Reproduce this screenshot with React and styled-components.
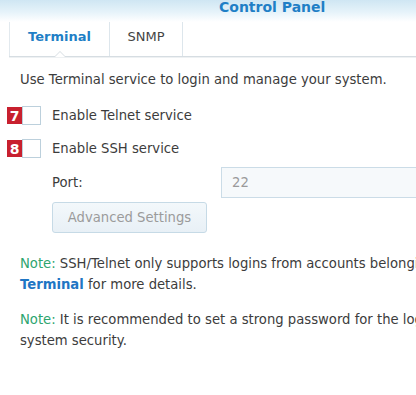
import React from 'react';
import styled, { createGlobalStyle } from 'styled-components';

const Global = createGlobalStyle`
  html, body {
    margin: 0;
    padding: 0;
    background: #fff;
    overflow: hidden;
  }
  body {
    font-family: "DejaVu Sans", Verdana, sans-serif;
    color: #3c3c3c;
  }
`;

const Window = styled.div`
  width: 416px;
  height: 395px;
  overflow: hidden;
  background: #fff;
`;

const TitleBar = styled.div`
  height: 22px;
  display: flex;
  align-items: flex-end;
  padding-left: 219px;
  background: linear-gradient(to bottom, #cfe6f3 0%, #e6f3fa 55%, #ffffff 100%);
`;

const Title = styled.div`
  font-weight: bold;
  font-size: 14px;
  color: #1f7fc6;
  line-height: 16px;
  margin-bottom: 7px;
  white-space: nowrap;
`;

const TabBar = styled.div`
  margin-left: 9px;
  height: 34px;
  display: flex;
  border-bottom: 1px solid #d6dde2;
  box-shadow: 0 1px 0 #eef1f3;
  position: relative;
`;

const Tab = styled.div`
  width: ${p => p.$w}px;
  display: flex;
  align-items: center;
  justify-content: center;
  padding-bottom: 5px;
  box-sizing: border-box;
  border-left: ${p => (p.$first ? '1px solid #e2e9ee' : 'none')};
  border-right: 1px solid #dde6ec;
  font-size: 13px;
  font-weight: ${p => (p.$active ? 'bold' : 'normal')};
  color: ${p => (p.$active ? '#1f7fc6' : '#444')};
  position: relative;
  ${p =>
    p.$active &&
    `
    &::after {
      content: '';
      position: absolute;
      left: 44px;
      bottom: -1px;
      width: 0;
      height: 0;
      border-left: 6px solid transparent;
      border-right: 6px solid transparent;
      border-bottom: 6px solid #d6dde2;
    }
    &::before {
      content: '';
      position: absolute;
      left: 45px;
      bottom: -1px;
      width: 0;
      height: 0;
      border-left: 5px solid transparent;
      border-right: 5px solid transparent;
      border-bottom: 5px solid #fff;
      z-index: 1;
    }
  `}
`;

const Content = styled.div`
  padding: 15px 0 0 20px;
  font-size: 13.2px;
`;

const Intro = styled.div`
  line-height: 16px;
  white-space: nowrap;
  margin-bottom: 18px;
`;

const CheckRow = styled.div`
  display: flex;
  align-items: center;
  height: 19px;
  margin-left: -13px;
  margin-bottom: ${p => p.$gap}px;
`;

const Badge = styled.div`
  width: 15px;
  height: 17px;
  background: #c8202f;
  color: #fff;
  font-weight: bold;
  font-size: 14px;
  display: flex;
  align-items: center;
  justify-content: center;
  line-height: 1;
`;

const Box = styled.div`
  width: 17px;
  height: 17px;
  border: 1px solid #bcd0dc;
  background: #fff;
  margin-right: 11px;
`;

const Label = styled.span`
  white-space: nowrap;
`;

const FieldRow = styled.div`
  display: flex;
  align-items: center;
  padding-left: 32px;
  height: 31px;
  margin-bottom: 4px;
`;

const FieldLabel = styled.span`
  width: 169px;
`;

const Input = styled.div`
  flex: 1;
  height: 29px;
  margin-right: -10px;
  border: 1px solid #cbdce7;
  background: #f6f9fb;
  color: #9a9a9a;
  display: flex;
  align-items: center;
  padding-left: 10px;
`;

const Button = styled.div`
  margin-left: 32px;
  width: 153px;
  height: 29px;
  border: 1px solid #c6dae6;
  border-radius: 3px;
  background: linear-gradient(to bottom, #f3f8fb, #e8f0f6);
  color: #9b9b9b;
  display: flex;
  align-items: center;
  justify-content: center;
  margin-bottom: 21px;
`;

const Note = styled.div`
  line-height: 20.5px;
  white-space: nowrap;
  margin-bottom: ${p => p.$gap}px;
`;

const NoteTag = styled.span`
  color: #2ea56f;
`;

const Link = styled.span`
  color: #1f76c4;
  font-weight: bold;
`;

export default function App() {
  return (
    <Window>
      <Global />
      <TitleBar>
        <Title>Control Panel</Title>
      </TitleBar>
      <TabBar>
        <Tab $w={101} $first $active>Terminal</Tab>
        <Tab $w={73}>SNMP</Tab>
      </TabBar>
      <Content>
        <Intro>Use Terminal service to login and manage your system.</Intro>
        <CheckRow $gap={14}>
          <Badge>7</Badge>
          <Box />
          <Label>Enable Telnet service</Label>
        </CheckRow>
        <CheckRow $gap={9}>
          <Badge>8</Badge>
          <Box />
          <Label>Enable SSH service</Label>
        </CheckRow>
        <FieldRow>
          <FieldLabel>Port:</FieldLabel>
          <Input>22</Input>
        </FieldRow>
        <Button>Advanced Settings</Button>
        <Note $gap={15}>
          <NoteTag>Note:</NoteTag> SSH/Telnet only supports logins from accounts belonging to the administrators group. See
          <br />
          <Link>Terminal</Link> for more details.
        </Note>
        <Note $gap={0}>
          <NoteTag>Note:</NoteTag> It is recommended to set a strong password for the login account to improve
          <br />
          system security.
        </Note>
      </Content>
    </Window>
  );
}
